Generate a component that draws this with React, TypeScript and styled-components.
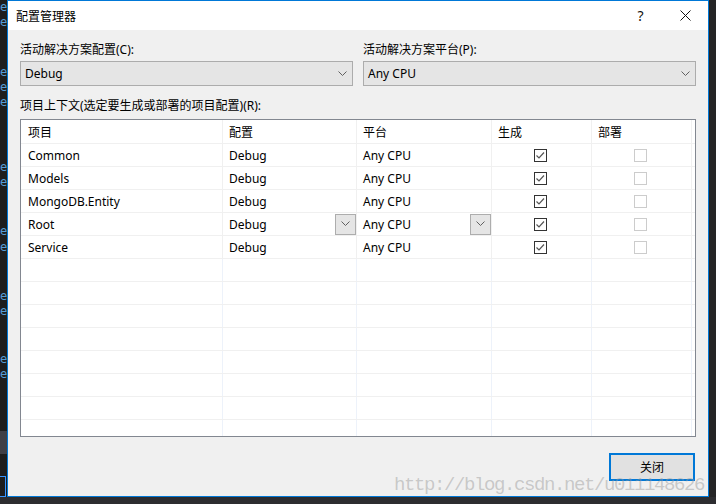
import React from 'react';
import styled, { createGlobalStyle } from 'styled-components';

const GlobalStyle = createGlobalStyle`
    html, body {
        margin: 0;
        padding: 0;
        background: #1e1e1e;
    }
    body {
        font-family: "Noto Sans", "Noto Sans CJK SC", sans-serif;
        font-size: 12px;
        color: #000;
    }
`;

const FONT = `"Noto Sans", "Noto Sans CJK SC", sans-serif`;

// whole 716x504 capture: editor behind, dialog on top
const Screen = styled.div`
    position: relative;
    width: 716px;
    height: 504px;
    display: grid;
    grid-template-columns: 7px 702px 7px;
    grid-template-rows: 497px 7px;
    background: #1e1e1e;
    overflow: hidden;
`;

const EditorStrip = styled.div`
    display: flex;
    flex-direction: column;
    overflow: hidden;
    background: #1e1e1e;
`;

const CodeLine = styled.div<{ $gap: number }>`
    margin-top: ${p => p.$gap}px;
    height: 15px;
    line-height: 15px;
    font-family: "DejaVu Sans Mono", monospace;
    font-size: 12px;
    color: #569cd6;
    white-space: nowrap;
`;

const StripBand = styled.div<{ $gap: number; $h: number }>`
    margin-top: ${p => p.$gap}px;
    height: ${p => p.$h}px;
    background: #3f3f46;
`;

const StripBox = styled.div<{ $gap: number }>`
    margin-top: ${p => p.$gap}px;
    height: 20px;
    width: 5px;
    border: 1px solid #3794ff;
    border-left: none;
`;

const RightStrip = styled.div`
    background: #252526;
`;

const BottomStrip = styled.div`
    grid-column: 1 / 4;
    background: #2d2d30;
`;

const Dialog = styled.div`
    box-sizing: border-box;
    border: 1px solid #0078d7;
    background: #f0f0f0;
    display: flex;
    flex-direction: column;
`;

const TitleBar = styled.div`
    height: 29px;
    background: #fff;
    display: flex;
    align-items: center;
    padding-left: 8px;
    font-family: ${FONT};
    font-size: 12px;
    color: #000;
`;

const TitleText = styled.div`
    flex: 1;
`;

const TitleButton = styled.div`
    width: 45px;
    height: 29px;
    display: flex;
    align-items: center;
    justify-content: center;
    font-size: 14px;
    color: #111;
`;

const Body = styled.div`
    flex: 1;
    display: flex;
    flex-direction: column;
    padding: 12px 12px 0 12px;
`;

const TopRow = styled.div`
    display: grid;
    grid-template-columns: 333px 333px;
    column-gap: 10px;
`;

const Field = styled.div`
    display: flex;
    flex-direction: column;
`;

const Label = styled.div`
    height: 16px;
    line-height: 16px;
    margin-bottom: 3px;
    font-size: 12px;
    color: #000;
    white-space: nowrap;
`;

const Combo = styled.div`
    box-sizing: border-box;
    height: 25px;
    border: 1px solid #acacac;
    background: #e5e5e5;
    display: flex;
    align-items: center;
    justify-content: space-between;
    padding: 0 5px 0 4px;
    font-size: 12px;
`;

const ContextLabel = styled(Label)`
    margin-top: 12px;
    margin-bottom: 5px;
`;

const Table = styled.div`
    box-sizing: border-box;
    height: 318px;
    border: 1px solid #828790;
    background: #fff;
    overflow: hidden;
`;

const Row = styled.div<{ $head?: boolean }>`
    display: grid;
    grid-template-columns: 202px 134px 135px 100px 100px 1fr;
    height: ${p => (p.$head ? 23 : 22)}px;
    border-bottom: 1px solid #f0f0f0;
`;

const Cell = styled.div<{ $empty?: boolean; $center?: boolean; $last?: boolean }>`
    box-sizing: border-box;
    display: flex;
    align-items: center;
    justify-content: ${p => (p.$center ? 'center' : 'space-between')};
    padding-left: ${p => (p.$center ? 0 : 6)}px;
    border-right: ${p => (p.$last ? 'none' : `1px solid ${p.$empty ? '#edf2fa' : '#f0f0f0'}`)};
    font-size: 12px;
    white-space: nowrap;
    overflow: hidden;
`;

const NameCell = styled(Cell)`
    padding-left: 7px;
`;

const CellButton = styled.div`
    box-sizing: border-box;
    width: 21px;
    height: 21px;
    border: 1px solid #adadad;
    background: #e5e5e5;
    display: flex;
    align-items: center;
    justify-content: center;
`;

const Check = styled.div<{ $disabled?: boolean }>`
    box-sizing: border-box;
    width: 13px;
    height: 13px;
    margin-right: 2px;
    border: 1px solid ${p => (p.$disabled ? '#cccccc' : '#333333')};
    background: #fff;
    display: flex;
    align-items: center;
    justify-content: center;
`;

const Footer = styled.div`
    display: flex;
    justify-content: flex-end;
    padding: 16px 1px 0 0;
`;

const CloseButton = styled.div`
    box-sizing: border-box;
    width: 86px;
    height: 28px;
    border: 2px solid #0078d7;
    background: #e1e1e1;
    display: flex;
    align-items: center;
    justify-content: center;
    font-size: 12px;
`;

const Watermark = styled.div`
    position: absolute;
    left: 394px;
    top: 473px;
    font-family: "Liberation Mono", monospace;
    font-size: 19px;
    letter-spacing: -1.4px;
    line-height: 24px;
    color: rgba(150, 150, 150, 0.45);
    white-space: nowrap;
    pointer-events: none;
`;

const Chevron = () => (
    <svg width="9" height="6" viewBox="0 0 9 6">
        <path d="M0.5 0.5 L4.5 4.5 L8.5 0.5" fill="none" stroke="#606060" strokeWidth="1" />
    </svg>
);

const CloseIcon = () => (
    <svg width="11" height="11" viewBox="0 0 11 11">
        <path d="M0.5 0.5 L10.5 10.5 M10.5 0.5 L0.5 10.5" fill="none" stroke="#111" strokeWidth="1" />
    </svg>
);

const Tick = () => (
    <svg width="11" height="11" viewBox="0 0 11 11">
        <path d="M1.5 5.5 L4 8 L9 2.5" fill="none" stroke="#555" strokeWidth="1.2" />
    </svg>
);

const projects = [
    { name: 'Common', picker: false },
    { name: 'Models', picker: false },
    { name: 'MongoDB.Entity', picker: false },
    { name: 'Root', picker: true },
    { name: 'Service', picker: false },
];

// y positions of the code fragments peeking out on the left
const codeLines = [3, 18, 68, 83, 98, 163, 178, 227, 243, 292, 307, 355, 370];

function App() {
    let prev = -4;
    const strip = codeLines.map((y, i) => {
        const gap = y - 7 - prev;
        prev = y + 8;
        return <CodeLine key={i} $gap={gap}>e</CodeLine>;
    });

    const emptyRows = [0, 1, 2, 3, 4, 5, 6, 7];

    return (
        <>
            <GlobalStyle />
            <Screen>
                <EditorStrip>
                    {strip}
                    <StripBand $gap={49} $h={24} />
                    <StripBox $gap={22} />
                </EditorStrip>

                <Dialog>
                    <TitleBar>
                        <TitleText>配置管理器</TitleText>
                        <TitleButton>?</TitleButton>
                        <TitleButton><CloseIcon /></TitleButton>
                    </TitleBar>

                    <Body>
                        <TopRow>
                            <Field>
                                <Label>活动解决方案配置(C):</Label>
                                <Combo>Debug<Chevron /></Combo>
                            </Field>
                            <Field>
                                <Label>活动解决方案平台(P):</Label>
                                <Combo>Any CPU<Chevron /></Combo>
                            </Field>
                        </TopRow>

                        <ContextLabel>项目上下文(选定要生成或部署的项目配置)(R):</ContextLabel>

                        <Table>
                            <Row $head>
                                <NameCell>项目</NameCell>
                                <Cell>配置</Cell>
                                <Cell>平台</Cell>
                                <Cell>生成</Cell>
                                <Cell>部署</Cell>
                                <Cell $last />
                            </Row>
                            {projects.map(p => (
                                <Row key={p.name}>
                                    <NameCell>{p.name}</NameCell>
                                    <Cell>
                                        Debug
                                        {p.picker && <CellButton><Chevron /></CellButton>}
                                    </Cell>
                                    <Cell>
                                        Any CPU
                                        {p.picker && <CellButton><Chevron /></CellButton>}
                                    </Cell>
                                    <Cell $center>
                                        <Check><Tick /></Check>
                                    </Cell>
                                    <Cell $center>
                                        <Check $disabled />
                                    </Cell>
                                    <Cell $last />
                                </Row>
                            ))}
                            {emptyRows.map(i => (
                                <Row key={'e' + i}>
                                    <NameCell $empty />
                                    <Cell $empty />
                                    <Cell $empty />
                                    <Cell $empty />
                                    <Cell $empty />
                                    <Cell $last />
                                </Row>
                            ))}
                        </Table>

                        <Footer>
                            <CloseButton>关闭</CloseButton>
                        </Footer>
                    </Body>
                </Dialog>

                <RightStrip />
                <BottomStrip />

                <Watermark>http://blog.csdn.net/u011148626</Watermark>
            </Screen>
        </>
    );
}

export default App;
